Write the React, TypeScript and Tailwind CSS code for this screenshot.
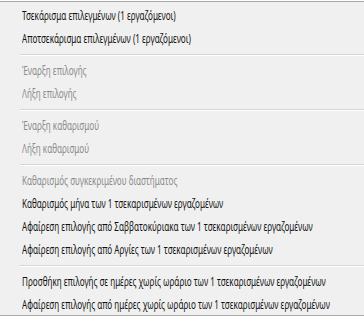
import React from 'react';

type Item = { label: string; disabled?: boolean } | 'sep';

const items: Item[] = [
  { label: 'Τσεκάρισμα επιλεγμένων (1 εργαζόμενοι)' },
  { label: 'Αποτσεκάρισμα επιλεγμένων (1 εργαζόμενοι)' },
  'sep',
  { label: 'Έναρξη επιλογής', disabled: true },
  { label: 'Λήξη επιλογής', disabled: true },
  'sep',
  { label: 'Έναρξη καθαρισμού', disabled: true },
  { label: 'Λήξη καθαρισμού', disabled: true },
  'sep',
  { label: 'Καθαρισμός συγκεκριμένου διαστήματος', disabled: true },
  { label: 'Καθαρισμός μήνα των 1 τσεκαρισμένων εργαζομένων' },
  { label: 'Αφαίρεση επιλογής από Σαββατοκύριακα των 1 τσεκαρισμένων εργαζομένων' },
  { label: 'Αφαίρεση επιλογής από Αργίες των 1 τσεκαρισμένων εργαζομένων' },
  'sep',
  { label: 'Προσθήκη επιλογής σε ημέρες χωρίς ωράριο των 1 τσεκαρισμένων εργαζομένων' },
  { label: 'Αφαίρεση επιλογής από ημέρες χωρίς ωράριο των 1 τσεκαρισμένων εργαζομένων' },
];

export default function App() {
  return (
    <div className="w-[364px] h-[316px] bg-white overflow-hidden">
      <div className="mt-px h-[315px] border-t border-b border-[#a8a8a8] bg-[#f0f0f0] pt-[2px] font-['Noto_Sans',sans-serif] text-[12px]">
        {items.map((item, i) =>
          item === 'sep' ? (
            <div key={i} className="h-[9px] flex flex-col justify-center pl-5">
              <div className="h-px bg-[#d5d5d5]" />
              <div className="h-px bg-white" />
            </div>
          ) : (
            <div
              key={i}
              className={
                'h-[23px] flex items-center pl-[22px] whitespace-nowrap ' +
                (item.disabled ? 'text-[#8a8a8a]' : 'text-[#111111]')
              }
            >
              <span className="inline-block origin-left scale-x-[0.675]">{item.label}</span>
            </div>
          )
        )}
      </div>
    </div>
  );
}
